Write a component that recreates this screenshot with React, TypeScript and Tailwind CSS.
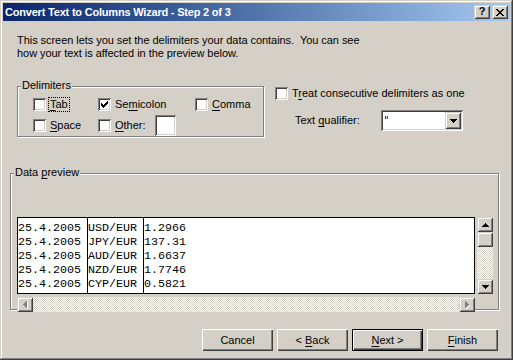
import React from "react";

const raisedBtn =
  "shadow-[inset_1px_1px_#ffffff,inset_-1px_-1px_#404040,inset_-2px_-2px_#808080]";
const raisedCtl =
  "shadow-[inset_1px_1px_#d4d0c8,inset_-1px_-1px_#404040,inset_2px_2px_#ffffff,inset_-2px_-2px_#808080]";
const sunken =
  "shadow-[inset_1px_1px_#808080,inset_-1px_-1px_#ffffff,inset_2px_2px_#404040,inset_-2px_-2px_#d4d0c8]";

function Check() {
  const px = [
    [6, 0], [5, 1], [6, 1], [0, 2], [4, 2], [5, 2], [6, 2],
    [0, 3], [1, 3], [3, 3], [4, 3], [5, 3],
    [0, 4], [1, 4], [2, 4], [3, 4], [4, 4],
    [1, 5], [2, 5], [3, 5], [2, 6],
  ];
  return (
    <svg width="7" height="7" viewBox="0 0 7 7" shapeRendering="crispEdges">
      {px.map(([x, y], i) => (
        <rect key={i} x={x} y={y} width="1" height="1" fill="#000" />
      ))}
    </svg>
  );
}

function Checkbox({ checked }: { checked?: boolean }) {
  return (
    <div
      className={`w-[13px] h-[13px] shrink-0 bg-white flex items-center justify-center ${sunken}`}
    >
      {checked && <Check />}
    </div>
  );
}

function U({ children }: { children: React.ReactNode }) {
  return <span className="underline underline-offset-[2px]">{children}</span>;
}

function Arrow({ dir, gray }: { dir: "up" | "down" | "left" | "right"; gray?: boolean }) {
  const c = gray ? "#808080" : "#000";
  if (dir === "up")
    return (
      <svg width="7" height="4" viewBox="0 0 7 4" shapeRendering="crispEdges">
        <rect x="3" y="0" width="1" height="1" fill={c} />
        <rect x="2" y="1" width="3" height="1" fill={c} />
        <rect x="1" y="2" width="5" height="1" fill={c} />
        <rect x="0" y="3" width="7" height="1" fill={c} />
      </svg>
    );
  if (dir === "down")
    return (
      <svg width="7" height="4" viewBox="0 0 7 4" shapeRendering="crispEdges">
        <rect x="0" y="0" width="7" height="1" fill={c} />
        <rect x="1" y="1" width="5" height="1" fill={c} />
        <rect x="2" y="2" width="3" height="1" fill={c} />
        <rect x="3" y="3" width="1" height="1" fill={c} />
      </svg>
    );
  if (dir === "left")
    return (
      <svg width="5" height="8" viewBox="0 0 5 8" shapeRendering="crispEdges">
        {gray && (
          <>
            <rect x="4" y="0" width="1" height="8" fill="#fff" />
            <rect x="1" y="4" width="1" height="1" fill="#fff" />
            <rect x="2" y="5" width="1" height="1" fill="#fff" />
            <rect x="3" y="6" width="1" height="1" fill="#fff" />
          </>
        )}
        <rect x="0" y="3" width="1" height="1" fill={c} />
        <rect x="1" y="2" width="1" height="3" fill={c} />
        <rect x="2" y="1" width="1" height="5" fill={c} />
        <rect x="3" y="0" width="1" height="7" fill={c} />
      </svg>
    );
  return (
    <svg width="5" height="8" viewBox="0 0 5 8" shapeRendering="crispEdges">
      {gray && (
        <>
          <rect x="1" y="7" width="1" height="1" fill="#fff" />
          <rect x="2" y="6" width="1" height="1" fill="#fff" />
          <rect x="3" y="5" width="1" height="1" fill="#fff" />
          <rect x="4" y="4" width="1" height="1" fill="#fff" />
        </>
      )}
      <rect x="0" y="0" width="1" height="7" fill={c} />
      <rect x="1" y="1" width="1" height="5" fill={c} />
      <rect x="2" y="2" width="1" height="3" fill={c} />
      <rect x="3" y="3" width="1" height="1" fill={c} />
    </svg>
  );
}

const hatch =
  "bg-[repeating-conic-gradient(#ffffff_0_25%,#d4d0c8_0_50%)] bg-[length:2px_2px]";

function Button({
  children,
  def,
}: {
  children: React.ReactNode;
  def?: boolean;
}) {
  return (
    <div
      className={`w-[71px] h-[22px] flex items-center justify-center bg-[#d4d0c8] ${
        def
          ? "shadow-[inset_0_0_0_1px_#000000,inset_2px_2px_#ffffff,inset_-2px_-2px_#404040,inset_-3px_-3px_#808080]"
          : raisedBtn
      }`}
    >
      <span className="whitespace-pre">{children}</span>
    </div>
  );
}

const rows = [
  ["25.4.2005", "USD/EUR", "1.2966"],
  ["25.4.2005", "JPY/EUR", "137.31"],
  ["25.4.2005", "AUD/EUR", "1.6637"],
  ["25.4.2005", "NZD/EUR", "1.7746"],
  ["25.4.2005", "CYP/EUR", "0.5821"],
];

export default function App() {
  return (
    <div
      className="antialiased w-[513px] h-[360px] bg-[#d4d0c8] p-[3px] text-[11px] text-black shadow-[inset_-1px_-1px_#404040,inset_1px_1px_#d4d0c8,inset_-2px_-2px_#808080,inset_2px_2px_#ffffff] overflow-hidden"
      style={{ fontFamily: '"Liberation Sans", Arial, sans-serif' }}
    >
      {/* Title bar */}
      <div className="h-[18px] flex items-center bg-linear-to-r from-[#0a246a] to-[#a6caf0] pl-[2px] pr-[2px]">
        <div className="flex-1 text-white font-bold text-[11px] tracking-[-0.2px] leading-[18px] whitespace-nowrap">
          Convert Text to Columns Wizard - Step 2 of 3
        </div>
        <div
          className={`w-[16px] h-[14px] bg-[#d4d0c8] flex items-center justify-center font-bold text-[11px] leading-none ${raisedCtl}`}
        >
          <span className="-mt-[1px]">?</span>
        </div>
        <div
          className={`ml-[2px] w-[16px] h-[14px] bg-[#d4d0c8] flex items-center justify-center ${raisedCtl}`}
        >
          <svg width="8" height="7" viewBox="0 0 8 7" shapeRendering="crispEdges">
            {[0, 1, 2, 3, 4, 5, 6].map((i) => (
              <React.Fragment key={i}>
                <rect x={i} y={i} width="2" height="1" fill="#000" />
                <rect x={6 - i} y={i} width="2" height="1" fill="#000" />
              </React.Fragment>
            ))}
          </svg>
        </div>
      </div>

      {/* Description */}
      <div className="ml-[14px] mt-[13px] h-[26px] leading-[13px] tracking-[-0.05px]">
        <div>This screen lets you set the delimiters your data contains.&nbsp; You can see</div>
        <div>how your text is affected in the preview below.</div>
      </div>

      {/* Delimiters + options */}
      <div className="mt-[26px] flex h-[52px]">
        <div className="relative ml-[14px] w-[248px] h-[52px]">
          <div className="absolute left-0 top-0 w-[247px] h-[51px] border border-[#808080] shadow-[1px_1px_0_#ffffff,inset_1px_1px_0_#ffffff]" />
          <div className="absolute left-[4px] -top-[7px] px-[1px] bg-[#d4d0c8] leading-[13px]">
            Delimiters
          </div>
          <div className="relative pl-[16px] pt-[12px]">
            <div className="flex h-[13px] items-center leading-[13px]">
              <div className="w-[65px] flex items-center">
                <Checkbox />
                <span className="ml-[2px] px-[1px] border border-dotted border-black leading-[13px]">
                  <U>T</U>ab
                </span>
              </div>
              <div className="w-[97px] flex items-center">
                <Checkbox checked />
                <span className="ml-[4px]">
                  Se<U>m</U>icolon
                </span>
              </div>
              <div className="flex items-center">
                <Checkbox />
                <span className="ml-[4px]">
                  <U>C</U>omma
                </span>
              </div>
            </div>
            <div className="flex h-[21px] items-center mt-[4px] leading-[13px]">
              <div className="w-[65px] flex items-center">
                <Checkbox />
                <span className="ml-[4px]">
                  <U>S</U>pace
                </span>
              </div>
              <div className="flex items-center">
                <Checkbox />
                <span className="ml-[4px] w-[40px]">
                  <U>O</U>ther:
                </span>
                <div className={`w-[21px] h-[21px] bg-white ${sunken}`} />
              </div>
            </div>
          </div>
        </div>

        <div className="ml-[10px] pt-[1px]">
          <div className="flex items-center h-[13px] leading-[13px]">
            <Checkbox />
            <span className="ml-[4px]">
              T<U>r</U>eat consecutive delimiters as one
            </span>
          </div>
          <div className="flex items-center mt-[10px] h-[21px]">
            <span className="ml-[20px] w-[86px]">
              Text <U>q</U>ualifier:
            </span>
            <div className={`w-[82px] h-[21px] bg-white flex items-center p-[2px] ${sunken}`}>
              <span
                className="flex-1 pl-[1px] leading-[17px] text-black will-change-transform"
                style={{ fontFamily: '"DejaVu Sans", sans-serif', fontSize: "10px" }}
              >
                &quot;
              </span>
              <div
                className={`w-[16px] h-[17px] bg-[#d4d0c8] flex items-center justify-center ${raisedCtl}`}
              >
                <Arrow dir="down" />
              </div>
            </div>
          </div>
        </div>
      </div>

      {/* Data preview */}
      <div className="relative mt-[35px] ml-[7px] w-[490px] h-[140px]">
        <div className="absolute left-0 top-0 w-[489px] h-[137px] border border-[#808080] shadow-[1px_1px_0_#ffffff,inset_1px_1px_0_#ffffff]" />
        <div className="absolute left-[4px] -top-[7px] px-[1px] bg-[#d4d0c8] leading-[13px]">
          Data <U>p</U>review
        </div>
        <div className="relative pl-[7px] pt-[44px]">
          <div className="flex">
            <div
              className="w-[458px] h-[77px] bg-white border border-black pt-[3px] relative"
              style={{ fontFamily: '"Liberation Mono", "Courier New", monospace' }}
            >
              <div className="absolute left-[69px] top-0 bottom-0 w-px bg-black" />
              <div className="absolute left-[125px] top-0 bottom-0 w-px bg-black" />
              {rows.map((r, i) => (
                <div key={i} className="flex h-[14px] leading-[14px] text-[11.67px] whitespace-nowrap">
                  <div className="w-[70px]">{r[0]}</div>
                  <div className="w-[56px]">{r[1]}</div>
                  <div>{r[2]}</div>
                </div>
              ))}
            </div>
            <div className="ml-[2px] w-[16px] h-[77px] flex flex-col">
              <div className={`h-[15px] bg-[#d4d0c8] flex items-center justify-center ${raisedCtl}`}>
                <Arrow dir="up" />
              </div>
              <div className={`h-[15px] bg-[#d4d0c8] ${raisedCtl}`} />
              <div className={`flex-1 ${hatch}`} />
              <div className={`h-[15px] bg-[#d4d0c8] flex items-center justify-center ${raisedCtl}`}>
                <Arrow dir="down" />
              </div>
            </div>
          </div>
          <div className={`mt-[3px] w-[458px] h-[15px] flex ${hatch}`}>
            <div className={`w-[16px] h-[15px] bg-[#d4d0c8] flex items-center justify-center ${raisedCtl}`}>
              <Arrow dir="left" gray />
            </div>
            <div className="flex-1" />
            <div className={`w-[16px] h-[15px] bg-[#d4d0c8] flex items-center justify-center ${raisedCtl}`}>
              <Arrow dir="right" gray />
            </div>
          </div>
        </div>
      </div>

      {/* Buttons */}
      <div className="mt-[16px] flex justify-end gap-[4px] pr-[12px] leading-[13px]">
        <Button>Cancel</Button>
        <Button>
          &lt; <U>B</U>ack
        </Button>
        <Button def>
          <U>N</U>ext &gt;
        </Button>
        <Button>
          <U>F</U>inish
        </Button>
      </div>
    </div>
  );
}
